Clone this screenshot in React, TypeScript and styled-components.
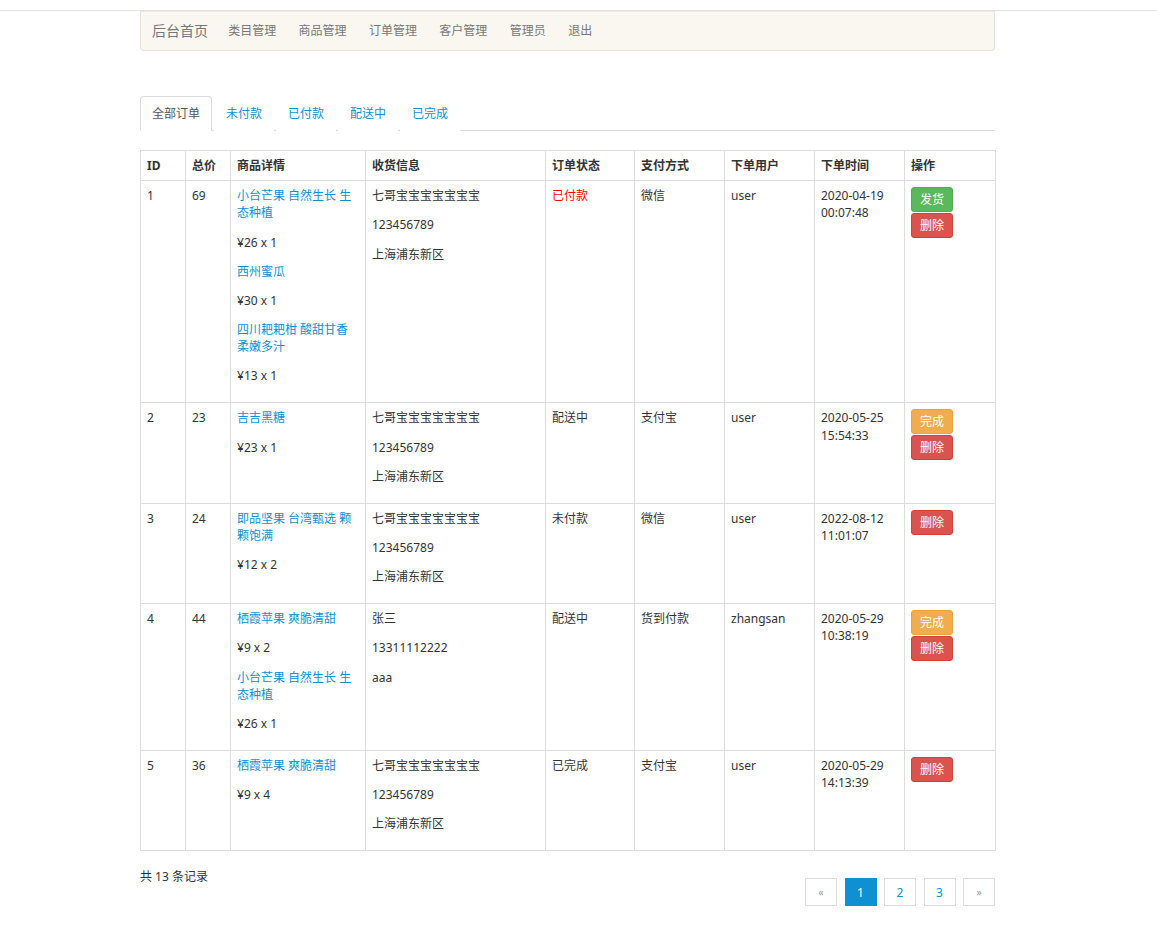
import React from "react";
import styled, { createGlobalStyle } from "styled-components";

const GlobalStyle = createGlobalStyle`
  body {
    margin: 0;
    background: #fff;
    font-family: "Noto Sans", "Noto Sans CJK SC", sans-serif;
    font-size: 12px;
    line-height: 1.42857;
    color: #333;
  }
  p {
    margin: 0 0 12px;
  }
`;

interface Item {
  name: string;
  price: number;
  count: number;
}

interface Order {
  id: number;
  total: number;
  items: Item[];
  receiver: string[];
  status: string;
  pay: string;
  user: string;
  time: string;
  actions: ("ship" | "done" | "delete")[];
}

const orders: Order[] = [
  {
    id: 1,
    total: 69,
    items: [
      { name: "小台芒果 自然生长 生态种植", price: 26, count: 1 },
      { name: "西州蜜瓜", price: 30, count: 1 },
      { name: "四川耙耙柑 酸甜甘香 柔嫩多汁", price: 13, count: 1 },
    ],
    receiver: ["七哥宝宝宝宝宝宝宝", "123456789", "上海浦东新区"],
    status: "已付款",
    pay: "微信",
    user: "user",
    time: "2020-04-19 00:07:48",
    actions: ["ship", "delete"],
  },
  {
    id: 2,
    total: 23,
    items: [{ name: "吉吉黑糖", price: 23, count: 1 }],
    receiver: ["七哥宝宝宝宝宝宝宝", "123456789", "上海浦东新区"],
    status: "配送中",
    pay: "支付宝",
    user: "user",
    time: "2020-05-25 15:54:33",
    actions: ["done", "delete"],
  },
  {
    id: 3,
    total: 24,
    items: [{ name: "即品坚果 台湾甄选 颗颗饱满", price: 12, count: 2 }],
    receiver: ["七哥宝宝宝宝宝宝宝", "123456789", "上海浦东新区"],
    status: "未付款",
    pay: "微信",
    user: "user",
    time: "2022-08-12 11:01:07",
    actions: ["delete"],
  },
  {
    id: 4,
    total: 44,
    items: [
      { name: "栖霞苹果 爽脆清甜", price: 9, count: 2 },
      { name: "小台芒果 自然生长 生态种植", price: 26, count: 1 },
    ],
    receiver: ["张三", "13311112222", "aaa"],
    status: "配送中",
    pay: "货到付款",
    user: "zhangsan",
    time: "2020-05-29 10:38:19",
    actions: ["done", "delete"],
  },
  {
    id: 5,
    total: 36,
    items: [{ name: "栖霞苹果 爽脆清甜", price: 9, count: 4 }],
    receiver: ["七哥宝宝宝宝宝宝宝", "123456789", "上海浦东新区"],
    status: "已完成",
    pay: "支付宝",
    user: "user",
    time: "2020-05-29 14:13:39",
    actions: ["delete"],
  },
];

const columns = [
  { title: "ID", width: 45 },
  { title: "总价", width: 45 },
  { title: "商品详情", width: 135 },
  { title: "收货信息", width: 180 },
  { title: "订单状态", width: 89 },
  { title: "支付方式", width: 90 },
  { title: "下单用户", width: 90 },
  { title: "下单时间", width: 90 },
  { title: "操作", width: 91 },
];

const tabs = ["全部订单", "未付款", "已付款", "配送中", "已完成"];
const navLinks = ["类目管理", "商品管理", "订单管理", "客户管理", "管理员", "退出"];

const actionInfo = {
  ship: { label: "发货", bg: "#5cb85c", border: "#4cae4c" },
  done: { label: "完成", bg: "#f0ad4e", border: "#eea236" },
  delete: { label: "删除", bg: "#d9534f", border: "#d43f3a" },
};

const App = () => {
  return (
    <>
      <GlobalStyle />
      <TopRule />
      <Container>
        <Navbar>
          <Brand>后台首页</Brand>
          {navLinks.map((l) => (
            <NavLink key={l}>{l}</NavLink>
          ))}
        </Navbar>

        <Tabs>
          {tabs.map((t, i) => (
            <Tab key={t} $active={i === 0}>
              {t}
            </Tab>
          ))}
        </Tabs>

        <Table>
          <colgroup>
            {columns.map((c) => (
              <col key={c.title} style={{ width: c.width }} />
            ))}
          </colgroup>
          <thead>
            <tr>
              {columns.map((c) => (
                <Th key={c.title}>{c.title}</Th>
              ))}
            </tr>
          </thead>
          <tbody>
            {orders.map((o) => (
              <tr key={o.id}>
                <Td>{o.id}</Td>
                <Td>{o.total}</Td>
                <Td>
                  {o.items.map((it, i) => (
                    <React.Fragment key={i}>
                      <p>
                        <ProductLink>{it.name}</ProductLink>
                      </p>
                      <p>
                        ¥{it.price} x {it.count}
                      </p>
                    </React.Fragment>
                  ))}
                </Td>
                <Td>
                  {o.receiver.map((r) => (
                    <p key={r}>{r}</p>
                  ))}
                </Td>
                <Td>
                  <Status $paid={o.status === "已付款"}>{o.status}</Status>
                </Td>
                <Td>{o.pay}</Td>
                <Td>{o.user}</Td>
                <Td>{o.time}</Td>
                <Td>
                  <Actions>
                    {o.actions.map((a) => (
                      <ActionButton
                        key={a}
                        $bg={actionInfo[a].bg}
                        $border={actionInfo[a].border}
                      >
                        {actionInfo[a].label}
                      </ActionButton>
                    ))}
                  </Actions>
                </Td>
              </tr>
            ))}
          </tbody>
        </Table>

        <Footer>
          <Summary>共 13 条记录</Summary>
          <Pager>
            <PageItem $muted>«</PageItem>
            <PageItem $active>1</PageItem>
            <PageItem>2</PageItem>
            <PageItem>3</PageItem>
            <PageItem $muted>»</PageItem>
          </Pager>
        </Footer>
      </Container>
    </>
  );
};

const TopRule = styled.div`
  height: 10px;
  border-bottom: 1px solid #e3e3e3;
`;

const Container = styled.div`
  width: 855px;
  margin-left: 140px;
  padding-bottom: 30px;
`;

const Navbar = styled.nav`
  display: flex;
  align-items: center;
  height: 38px;
  padding: 0 11px;
  background: #f9f7f0;
  border: 1px solid #e5e3dc;
  border-top-color: #ebe9e2;
  border-radius: 0 0 4px 4px;
  color: #777;
`;

const Brand = styled.span`
  font-size: 14px;
  padding-right: 9px;
  color: #777;
`;

const NavLink = styled.span`
  font-size: 12px;
  padding: 0 11.2px;
  color: #777;
  cursor: pointer;
`;

const Tabs = styled.ul`
  display: flex;
  list-style: none;
  margin: 45px 0 0;
  padding: 0;
  border-bottom: 1px solid #ddd;
`;

const Tab = styled.li<{ $active?: boolean }>`
  margin-right: 2px;
  margin-bottom: -1px;
  padding: 8px 11px;
  border: 1px solid ${(p) => (p.$active ? "#ddd" : "transparent")};
  border-bottom-color: ${(p) => (p.$active ? "#fff" : "transparent")};
  border-radius: 4px 4px 0 0;
  background: #fff;
  color: ${(p) => (p.$active ? "#555" : "#0e90d2")};
  cursor: pointer;
`;

const Table = styled.table`
  width: 855px;
  table-layout: fixed;
  border-collapse: collapse;
  margin-top: 19px;
  border: 1px solid #ddd;
`;

const Th = styled.th`
  text-align: left;
  font-weight: bold;
  padding: 6px;
  border: 1px solid #ddd;
  color: #333;
`;

const Td = styled.td`
  vertical-align: top;
  padding: 6px;
  border: 1px solid #ddd;
  color: #333;
`;

const ProductLink = styled.a`
  color: #0e90d2;
  cursor: pointer;
`;

const Status = styled.span<{ $paid?: boolean }>`
  color: ${(p) => (p.$paid ? "#ff0000" : "#333")};
`;

const Actions = styled.div`
  display: flex;
  flex-direction: column;
  align-items: flex-start;
  gap: 1px;
`;

const ActionButton = styled.button<{ $bg: string; $border: string }>`
  font-family: inherit;
  font-size: 12px;
  line-height: 17px;
  padding: 3px 8px;
  border: 1px solid ${(p) => p.$border};
  border-radius: 3px;
  background: ${(p) => p.$bg};
  color: #fff;
  cursor: pointer;
`;

const Footer = styled.div`
  display: flex;
  justify-content: space-between;
  align-items: flex-start;
`;

const Summary = styled.div`
  margin-top: 17px;
  color: #333;
`;

const Pager = styled.div`
  display: flex;
  gap: 7.5px;
  margin-top: 27px;
`;

const PageItem = styled.span<{ $active?: boolean; $muted?: boolean }>`
  display: flex;
  align-items: center;
  justify-content: center;
  width: 30px;
  height: 26px;
  border: 1px solid ${(p) => (p.$active ? "#0e90d2" : "#ddd")};
  background: ${(p) => (p.$active ? "#0e90d2" : "#fff")};
  color: ${(p) => (p.$active ? "#fff" : p.$muted ? "#999" : "#0e90d2")};
  font-size: ${(p) => (p.$muted ? "10px" : "12px")};
  cursor: pointer;
`;

export default App;
